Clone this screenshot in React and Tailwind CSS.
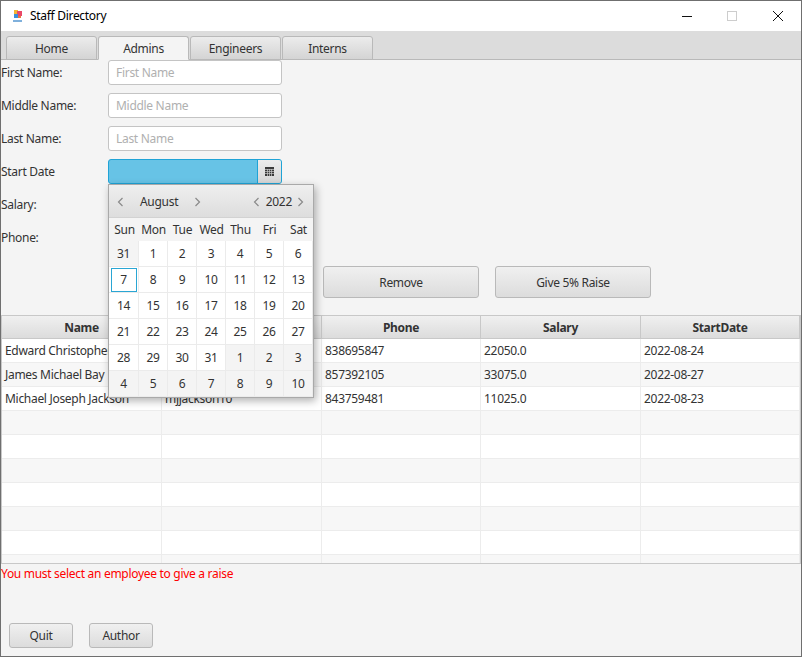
import React from 'react';

const font = "font-['Noto_Sans',sans-serif] tracking-[-0.3px]";
const btn = 'rounded-[3px] border border-[#b9b9b9] bg-gradient-to-b from-[#f0f0f0] to-[#dcdcdc] text-[#333] text-[12px] flex items-center justify-center pt-px';

const fields = [
  { label: 'First Name:', hint: 'First Name' },
  { label: 'Middle Name:', hint: 'Middle Name' },
  { label: 'Last Name:', hint: 'Last Name' },
];

const tabs = ['Home', 'Admins', 'Engineers', 'Interns'];
// second header and the first two usernames sit behind the open calendar
const columns = ['Name', '', 'Phone', 'Salary', 'StartDate'];
const people = [
  ['Edward Christopher', '', '838695847', '22050.0', '2022-08-24'],
  ['James Michael Bay', '', '857392105', '33075.0', '2022-08-27'],
  ['Michael Joseph Jackson', 'mjjackson10', '843759481', '11025.0', '2022-08-23'],
];

const weeks = [
  [31, 1, 2, 3, 4, 5, 6],
  [7, 8, 9, 10, 11, 12, 13],
  [14, 15, 16, 17, 18, 19, 20],
  [21, 22, 23, 24, 25, 26, 27],
  [28, 29, 30, 31, 1, 2, 3],
  [4, 5, 6, 7, 8, 9, 10],
];

const Chevron = ({ left }) => (
  <svg width="7" height="10" viewBox="0 0 7 10" fill="none" stroke="#8a8a8a" strokeWidth="1.2">
    <path d={left ? 'M5.500 1 1.500 5l4 4' : 'M1.500 1l4 4-4 4'} />
  </svg>
);

const Calendar = () => (
  <div className="absolute left-0 top-[25px] z-10 w-[206px] h-[214px] border border-[#a9a9a9] bg-[#ececec] shadow-[2px_3px_8px_rgba(0,0,0,0.3)]">
    <div className="h-[33px] flex items-center pl-[8px] pr-[9px] pt-px text-[12px] text-[#333] bg-gradient-to-b from-[#efefef] to-[#dddddd] border-b border-[#d2d2d2]">
      <Chevron left />
      <span className="ml-[16px] w-[54px]">August</span>
      <Chevron />
      <span className="ml-auto mr-[6px]"><Chevron left /></span>
      <span>2022</span>
      <span className="ml-[5px]"><Chevron /></span>
    </div>
    <div className="h-[23px] grid grid-cols-[repeat(7,29px)] pl-px bg-[#f4f4f4] text-[12px] text-[#333]">
      {['Sun', 'Mon', 'Tue', 'Wed', 'Thu', 'Fri', 'Sat'].map((d) => (
        <div key={d} className="flex items-center justify-center">{d}</div>
      ))}
    </div>
    <div className="grid grid-cols-[29px_repeat(6,28px)] gap-px bg-[#ebebeb] text-[12px] text-[#333]">
      {weeks.flat().map((d, i) => {
        const outside = i === 0 || i >= 32;
        return (
          <div key={i} className={`h-[25px] flex items-center justify-center ${outside ? 'bg-[#f4f4f4]' : 'bg-white'}`}>
            {i === 7 ? (
              <span className="w-[26px] h-[24px] border border-[#2aa6d4] flex items-center justify-center">{d}</span>
            ) : d}
          </div>
        );
      })}
    </div>
  </div>
);

const PersonTable = () => (
  <div className="mt-[17px] h-[249px] border border-[#c8c8c8] overflow-hidden text-[12px] text-[#333]">
    <div className="grid grid-cols-[160px_160px_159px_160px_1fr] h-[23px] bg-gradient-to-b from-[#f0f0f0] to-[#dcdcdc] border-b border-[#c8c8c8]">
      {columns.map((c, i) => (
        <div key={i} className="flex items-center justify-center pt-[2px] font-bold border-r border-[#c8c8c8]">{c}</div>
      ))}
    </div>
    {Array.from({ length: 10 }).map((_, r) => (
      <div key={r} className={`grid grid-cols-[160px_160px_159px_160px_1fr] h-[24px] border-b border-[#ececec] ${r % 2 ? 'bg-[#f7f7f7]' : 'bg-white'}`}>
        {columns.map((c, i) => (
          <div key={i} className="flex items-center px-[3px] border-r border-[#ececec] whitespace-nowrap overflow-hidden">
            {people[r] ? people[r][i] : ''}
          </div>
        ))}
      </div>
    ))}
  </div>
);

export default function App() {
  return (
    <div className={`${font} w-[802px] h-[657px] border border-[#6f6f6f] bg-[#f4f4f4] flex flex-col overflow-hidden`}>
      <div className="h-[30px] shrink-0 bg-white flex items-center">
        <svg className="ml-[12px]" width="10" height="13" viewBox="0 0 10 13">
          <rect x="1" y="0" width="4" height="4" fill="#f2b632" />
          <rect x="4" y="1" width="5" height="5" fill="#ea4868" />
          <rect x="1" y="4" width="4" height="4" fill="#3c8fd8" />
          <rect x="5" y="6" width="3" height="2" fill="#e9783c" />
          <rect x="0" y="10" width="9" height="2" fill="#7fb0dc" />
        </svg>
        <span className="ml-[7px] text-[12px] text-black">Staff Directory</span>
        <div className="ml-auto flex items-center">
          <svg width="46" height="30" viewBox="0 0 46 30"><path d="M19 15.500h10" stroke="#111" /></svg>
          <svg width="46" height="30" viewBox="0 0 46 30"><rect x="18.500" y="10.500" width="9" height="9" fill="none" stroke="#cdcdcd" /></svg>
          <svg width="46" height="30" viewBox="0 0 46 30"><path d="M18 10l10 10M28 10 18 20" stroke="#111" /></svg>
        </div>
      </div>

      <div className="h-[29px] shrink-0 bg-[#dcdcdc] border-b border-[#b9b9b9] flex items-end pl-[5px] gap-px">
        {tabs.map((t) => (
          <div
            key={t}
            className={`w-[91px] h-[24px] -mb-px pt-px rounded-t-[3px] border border-[#b9b9b9] flex items-center justify-center text-[12px] text-[#333] ${
              t === 'Admins' ? 'bg-[#f4f4f4] border-b-[#f4f4f4]' : 'bg-gradient-to-b from-[#ececec] to-[#d4d4d4]'
            }`}
          >
            {t}
          </div>
        ))}
      </div>

      <div className="flex flex-col gap-2 text-[12px] text-[#333]">
        {fields.map((f) => (
          <div key={f.label} className="h-[25px] flex items-center">
            <span className="w-[107px] pt-px">{f.label}</span>
            <div className="w-[174px] h-[25px] rounded-[3px] border border-[#c4c4c4] bg-white flex items-center px-[7px] pt-px text-[#b0b0b0]">{f.hint}</div>
          </div>
        ))}
        <div className="h-[25px] flex items-center">
          <span className="w-[107px] pt-px">Start Date</span>
          <div className="relative w-[174px] h-[25px]">
            <div className="h-full rounded-[3px] border border-[#1fa3d6] bg-[#67c3e6] flex justify-end">
              <div className="w-[24px] h-full rounded-r-[2px] border-l border-[#1fa3d6] bg-gradient-to-b from-[#ececec] to-[#d6d6d6] flex items-center justify-center">
                <svg width="9" height="9" viewBox="0 0 9 9">
                  <rect width="9" height="9" fill="#3a3a3a" />
                  <path d="M0 2.500h9M0 4.500h9M0 6.500h9M2.500 2v7M4.500 2v7M6.500 2v7" stroke="#c9c9c9" strokeWidth="0.7" />
                </svg>
              </div>
            </div>
            <Calendar />
          </div>
        </div>
        <div className="h-[25px] flex items-center"><span className="w-[107px] pt-px">Salary:</span></div>
        <div className="h-[25px] flex items-center"><span className="w-[107px] pt-px">Phone:</span></div>
      </div>

      <div className="mt-[16px] flex gap-4 pl-[322px]">
        <div className={`${btn} w-[156px] h-[32px]`}>Remove</div>
        <div className={`${btn} w-[156px] h-[32px]`}>Give 5% Raise</div>
      </div>

      <PersonTable />

      <p className="mt-[2px] text-[12px] text-[#ff0000] leading-[16px]">You must select an employee to give a raise</p>

      <div className="mt-[41px] flex gap-4 pl-[8px]">
        <div className={`${btn} w-[64px] h-[25px]`}>Quit</div>
        <div className={`${btn} w-[64px] h-[25px]`}>Author</div>
      </div>
    </div>
  );
}
